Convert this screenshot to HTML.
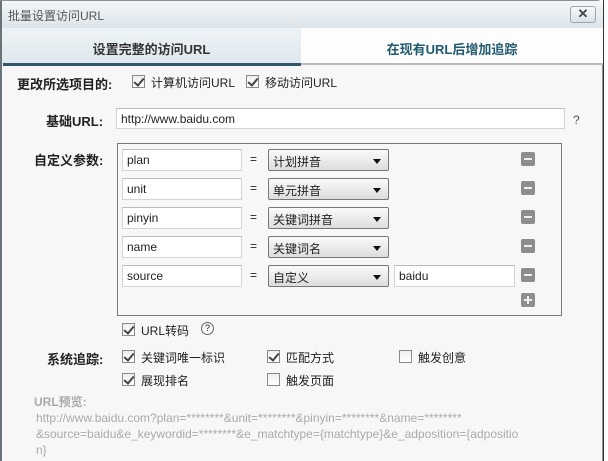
<!DOCTYPE html>
<html><head><meta charset="utf-8"><style>
*{margin:0;padding:0;box-sizing:border-box}
body{width:608px;height:461px;overflow:hidden;background:#fff;font-family:"Liberation Sans","Noto Sans CJK SC",sans-serif;font-size:12px;color:#222;position:relative}
.a{position:absolute;white-space:nowrap}
.dlg{position:absolute;left:0;top:0;width:603px;height:461px;background:#f7f7f7;border-left:2px solid #6a7378;border-right:1px solid #8a9298;border-top:1px solid #8a9298;border-radius:0 6px 0 0}
.title{position:absolute;left:0;top:0;width:601px;height:27px;background:linear-gradient(#f3f6f8,#dde5ea)}
.b{font-weight:bold}
.cb{position:absolute;width:13px;height:13px;border:1px solid #8a8a8a;background:linear-gradient(#eee,#fff)}
.cb.on::after{content:"";position:absolute;left:3px;top:0px;width:4px;height:8px;border:solid #444;border-width:0 2px 2px 0;transform:rotate(40deg)}
.inp{position:absolute;height:22px;background:#fff;border:1px solid #d4d4d4;border-top-color:#bbb;padding:3px 4px;font-size:12px}
.sel{position:absolute;height:22px;width:121px;border:1px solid #777;border-radius:2px;background:linear-gradient(#fafafa,#ddd);padding:3px 4px}
.sel::after{content:"";position:absolute;right:7px;top:9px;border:4px solid transparent;border-top:5px solid #111}
.mb{position:absolute;width:14px;height:14px;background:#8d8d8d;border-radius:2px}
.mb::before{content:"";position:absolute;left:3px;top:6px;width:8px;height:2px;background:#eee}
.pb::after{content:"";position:absolute;left:6px;top:3px;width:2px;height:8px;background:#eee}
.g{color:#aaa}
</style></head><body>
<div style="position:absolute;left:603px;top:0;width:5px;height:461px;background:#fff;border-left:1px solid #333"></div>
<div class="dlg">
<div class="title"></div>
<div class="a" style="left:6px;top:6px;color:#555;font-size:12px">批量设置访问URL</div>
<div class="a" style="left:568px;top:5px;width:26px;height:17px;border:1px solid #9aa6ae;border-radius:3px;background:linear-gradient(#f6f8fa,#dde3e8);text-align:center;font-size:13px;line-height:14px;color:#444;font-weight:bold">✕</div>
<div class="a" style="left:0;top:27px;width:299px;height:36px;background:linear-gradient(#eef3f6,#dfe8ee)"></div>
<div class="a" style="left:299px;top:27px;width:302px;height:36px;background:#fdfdfd"></div>
<div class="a" style="left:1px;top:62px;width:298px;height:3px;background:#2e5868"></div>
<div class="a" style="left:299px;top:62px;width:302px;height:2px;background:#bbb"></div>
<div class="a b" style="left:0;width:299px;top:38px;text-align:center;font-size:13px;color:#333">设置完整的访问URL</div>
<div class="a b" style="left:299px;width:302px;top:38px;text-align:center;font-size:13px;color:#1f5a6e">在现有URL后增加追踪</div>

<div class="a b" style="left:15px;top:73px;font-size:13px">更改所选项目的:</div>
<div class="cb on" style="left:130px;top:74px"></div><div class="a" style="left:149px;top:73px">计算机访问URL</div>
<div class="cb on" style="left:244px;top:74px"></div><div class="a" style="left:263px;top:73px">移动访问URL</div>

<div class="a b" style="left:44px;top:110px;font-size:13px">基础URL:</div>
<div class="inp" style="left:114px;top:107px;width:449px;height:21px">http://www.baidu.com</div>
<div class="a" style="left:571px;top:112px;color:#555">?</div>

<div class="a b" style="left:32px;top:149px;font-size:13px">自定义参数:</div>
<div class="a" style="left:115px;top:142px;width:445px;height:173px;border:1px solid #777"></div>

<div class="inp" style="left:120px;top:148px;width:120px">plan</div><div class="a" style="left:248px;top:151px">=</div><div class="sel" style="left:266px;top:148px">计划拼音</div><div class="mb" style="left:519px;top:151px"></div>
<div class="inp" style="left:120px;top:177px;width:120px">unit</div><div class="a" style="left:248px;top:180px">=</div><div class="sel" style="left:266px;top:177px">单元拼音</div><div class="mb" style="left:519px;top:180px"></div>
<div class="inp" style="left:120px;top:206px;width:120px">pinyin</div><div class="a" style="left:248px;top:209px">=</div><div class="sel" style="left:266px;top:206px">关键词拼音</div><div class="mb" style="left:519px;top:209px"></div>
<div class="inp" style="left:120px;top:235px;width:120px">name</div><div class="a" style="left:248px;top:238px">=</div><div class="sel" style="left:266px;top:235px">关键词名</div><div class="mb" style="left:519px;top:238px"></div>
<div class="inp" style="left:120px;top:264px;width:120px">source</div><div class="a" style="left:248px;top:267px">=</div><div class="sel" style="left:266px;top:264px">自定义</div><div class="inp" style="left:392px;top:264px;width:121px">baidu</div><div class="mb" style="left:519px;top:267px"></div>
<div class="mb pb" style="left:519px;top:292px"></div>

<div class="cb on" style="left:120px;top:322px"></div><div class="a" style="left:139px;top:321px">URL转码</div>
<div class="a" style="left:199px;top:321px;width:13px;height:13px;border:1px solid #666;border-radius:50%;font-size:9px;text-align:center;line-height:11px">?</div>

<div class="a b" style="left:45px;top:348px;font-size:13px">系统追踪:</div>
<div class="cb on" style="left:120px;top:349px"></div><div class="a" style="left:139px;top:348px">关键词唯一标识</div>
<div class="cb on" style="left:265px;top:349px"></div><div class="a" style="left:284px;top:348px">匹配方式</div>
<div class="cb" style="left:397px;top:349px"></div><div class="a" style="left:416px;top:348px">触发创意</div>
<div class="cb on" style="left:120px;top:372px"></div><div class="a" style="left:139px;top:371px">展现排名</div>
<div class="cb" style="left:265px;top:372px"></div><div class="a" style="left:284px;top:371px">触发页面</div>

<div class="a b g" style="left:32px;top:392px">URL预览:</div>
<div class="a g" style="left:34px;top:409px;line-height:16px">http://www.baidu.com?plan=********&amp;unit=********&amp;pinyin=********&amp;name=********<br>&amp;source=baidu&amp;e_keywordid=********&amp;e_matchtype={matchtype}&amp;e_adposition={adpositio<br>n}</div>
</div>
</body></html>
